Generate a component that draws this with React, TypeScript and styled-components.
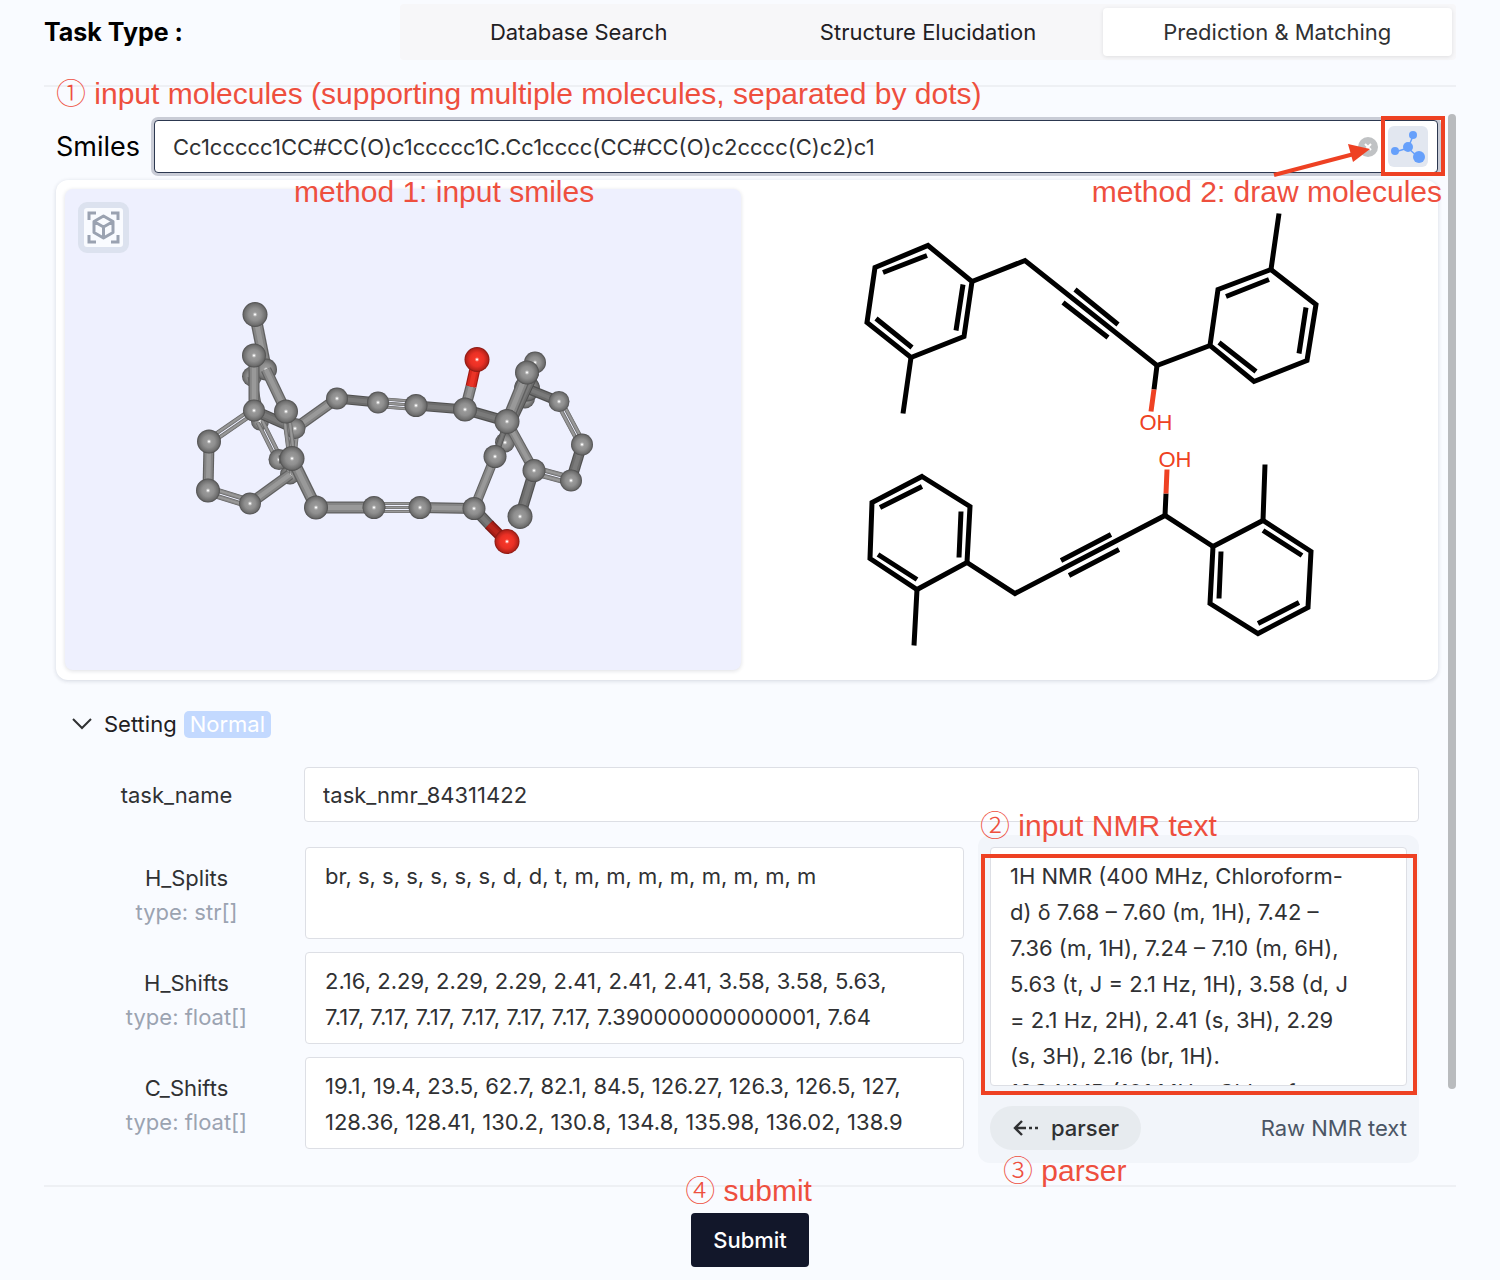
import React from "react";
import styled, { createGlobalStyle, css } from "styled-components";

const RED = "#ee4123";
const LABEL_RED = "#ee4f3e";

const GlobalStyle = createGlobalStyle`
  *, *::before, *::after { box-sizing: border-box; }
  body {
    margin: 0;
    background: #f9fbff;
    color: #303133;
    font-family: Inter, "Liberation Sans", sans-serif;
    font-size: 22px;
    line-height: 36px;
  }
  button, input, textarea { font: inherit; color: inherit; }
`;

const Page = styled.main`
  padding: 4px 44px 12px;
`;

const Header = styled.header`
  display: grid;
  grid-template-columns: 356fr 1056fr;
  align-items: center;
  height: 56px;
  margin-bottom: 25px;
`;

const Title = styled.h1`
  margin: 0;
  font-size: 25px;
  font-weight: 700;
  color: #000;
`;

const Tabs = styled.div`
  display: grid;
  grid-template-columns: repeat(3, 1fr);
  height: 56px;
  padding: 4px;
  border-radius: 4px;
  background: #f7f7f9;
`;

const Tab = styled.button<{ $active?: boolean }>`
  border: 0;
  border-radius: 4px;
  padding: 0;
  background: transparent;
  color: #1f2023;
  ${(p) =>
    p.$active &&
    css`
      background: #fff;
      color: #303133;
      box-shadow: 0 1px 4px rgba(0, 0, 0, 0.1);
    `}
`;

const Divider = styled.hr`
  height: 2px;
  margin: 0;
  border: 0;
  background: #eef0f4;
`;

const Scroller = styled.section`
  display: grid;
  grid-template-columns: 1fr 8px;
  column-gap: 10px;
  align-items: start;
  margin-top: 27px;
`;

const ScrollThumb = styled.div`
  height: 975px;
  border-radius: 4px;
  background: #b9bbbe;
`;

const Content = styled.div`
  padding: 6px 0 22px 12px;
`;

const Callout = styled.span<{ $left?: number; $right?: number; $top: number }>`
  position: absolute;
  top: ${(p) => p.$top}px;
  ${(p) => (p.$right === undefined ? `left: ${p.$left}px;` : `right: ${p.$right}px;`)}
  z-index: 3;
  color: ${LABEL_RED};
  font-family: "Liberation Sans", "Noto Sans CJK SC", sans-serif;
  font-size: 30px;
  line-height: 36px;
  white-space: nowrap;
  pointer-events: none;
`;

const Circled = styled.span`
  font-family: "Noto Sans CJK SC", sans-serif;
  font-weight: 300;
  line-height: 30px;
`;

const Highlight = styled.span<{ $inset: string; $width?: number }>`
  position: absolute;
  inset: ${(p) => p.$inset};
  ${(p) => p.$width && `width: ${p.$width}px;`}
  z-index: 2;
  border: 4px solid ${RED};
  pointer-events: none;
`;

const SmilesRow = styled.div`
  position: relative;
  display: flex;
  align-items: center;
  gap: 12px;
`;

const SmilesLabel = styled.label`
  width: 86px;
  font-size: 27px;
  color: #000;
`;

const SmilesBox = styled.div`
  position: relative;
  display: flex;
  align-items: center;
  flex: 1;
  height: 53px;
  padding-right: 9px;
  border: 1px solid #2c3850;
  border-radius: 4px;
  background: #fff;
  box-shadow: 0 0 0 3px #c9ccd6;
`;

const SmilesInput = styled.input`
  flex: 1;
  min-width: 0;
  padding: 0 18px;
  border: 0;
  outline: 0;
  background: transparent;
`;

const ClearButton = styled.button`
  display: grid;
  place-items: center;
  width: 20px;
  height: 20px;
  margin-right: 10px;
  padding: 0;
  border: 0;
  border-radius: 50%;
  background: #c0c2c4;
`;

const DrawButton = styled.button`
  display: grid;
  place-items: center;
  width: 40px;
  height: 41px;
  padding: 0;
  border: 0;
  border-radius: 6px;
  background: #e2e7f0;
`;

const Arrow = styled.svg`
  position: absolute;
  right: 65px;
  top: 21px;
  z-index: 3;
  pointer-events: none;
`;

const Viewer = styled.div`
  position: relative;
  display: grid;
  grid-template-columns: 676fr 689fr;
  height: 500px;
  margin-top: 7px;
  padding: 9px 8px 10px 9px;
  border-radius: 12px;
  background: #fff;
  box-shadow: 0 1px 4px rgba(20, 30, 60, 0.16);
`;

const Stage = styled.div`
  position: relative;
  border-radius: 8px;
  background: #eef0fe;
  box-shadow: 0 1px 4px rgba(20, 30, 60, 0.14);
`;

const Drawing = styled.svg`
  display: block;
  width: 100%;
  height: 100%;
  min-height: 0;
`;

const ViewButton = styled.button`
  position: absolute;
  left: 13px;
  top: 13px;
  display: grid;
  place-items: center;
  width: 51px;
  height: 51px;
  padding: 0;
  border: 6px solid #dce2ef;
  border-radius: 9px;
  background: #f9fbff;
`;

const SettingToggle = styled.button`
  display: flex;
  align-items: center;
  margin: 26px 0 0 16px;
  padding: 0;
  border: 0;
  background: transparent;
  color: #1f2023;
`;

const SettingName = styled.span`
  margin: 0 7px 0 12px;
`;

const Tag = styled.span`
  padding: 0 6px;
  border-radius: 5px;
  background: #c3d9ff;
  color: #fff;
  line-height: 27px;
`;

const Form = styled.form`
  display: grid;
  grid-template-columns: 248px 1fr;
  margin: 25px 19px 0 0;
`;

const NameLabel = styled.label`
  align-self: center;
  padding-right: 7px;
  text-align: center;
`;

const control = css`
  border: 1px solid #dddfe5;
  border-radius: 4px;
  outline: 0;
  background: #fff;
`;

const NameInput = styled.input`
  ${control}
  width: 100%;
  height: 55px;
  padding: 0 18px;
`;

const Fields = styled.div`
  grid-column: 1 / -1;
  display: grid;
  grid-template-columns: 908fr 441fr;
  column-gap: 14px;
  margin-top: 13px;
`;

const Peaks = styled.div`
  display: grid;
  align-content: start;
  row-gap: 13px;
  padding-top: 12px;
`;

const PeakRow = styled.div`
  display: grid;
  grid-template-columns: 249px 1fr;
  align-items: center;
`;

const PeakLabel = styled.label`
  padding: 3px 0 0 12px;
  text-align: center;
  line-height: 34px;
`;

const PeakType = styled.span`
  display: block;
  color: #9ba3b1;
`;

const PeakInput = styled.textarea`
  ${control}
  display: block;
  width: 100%;
  height: 92px;
  padding: 10px 48px 8px 19px;
  resize: none;
  overflow: hidden;
`;

const RawPanel = styled.div`
  position: relative;
  padding: 12px 12px 13px;
  border-radius: 12px;
  background: #f2f5fa;
`;

const RawInput = styled.textarea`
  ${control}
  display: block;
  width: 100%;
  height: 239px;
  padding: 10px 48px 0 19px;
  resize: none;
  overflow: hidden;
`;

const RawFooter = styled.div`
  display: flex;
  align-items: center;
  justify-content: space-between;
  margin-top: 20px;
`;

const ParserButton = styled.button`
  display: flex;
  align-items: center;
  gap: 12px;
  height: 44px;
  padding: 0 22px;
  border: 0;
  border-radius: 22px;
  background: #e7ebef;
  font-weight: 500;
`;

const RawCaption = styled.label`
  color: #4b5565;
`;

const Footer = styled.footer`
  display: flex;
  justify-content: center;
  padding-top: 26px;
`;

const SubmitSlot = styled.div`
  position: relative;
`;

const SubmitButton = styled.button`
  display: block;
  height: 54px;
  padding: 0 22px;
  border: 0;
  border-radius: 4px;
  background: #12172a;
  color: #fff;
  font-weight: 500;
`;

type P = [number, number];

/* Ball-and-stick model, painted back to front. */
type Part =
  | { k: "atom"; at: P; r: number; red?: boolean }
  | { k: "bond"; a: P; b: P; w?: number; n?: number; red?: boolean; shade?: boolean };

const atom = (x: number, y: number, r = 11, red = false): Part => ({ k: "atom", at: [x, y], r, red });
const bond = (a: P, b: P, w = 11, n = 1, o: { red?: boolean; shade?: boolean } = {}): Part => ({ k: "bond", a, b, w, n, ...o });

const MODEL: Part[] = [
  atom(252, 376, 10),
  bond([252, 376], [260, 421], 9),
  atom(260, 421, 9),
  bond([260, 421], [279, 459], 4, 2),
  atom(290, 474, 10),
  bond([295, 428], [290, 474], 4, 2),
  bond([290, 474], [250, 503]),
  atom(279, 459, 10.5),
  bond([279, 459], [292, 458], 8, 1, { shade: true }),
  bond([254, 410], [295, 428], 11, 1, { shade: true }),
  bond([295, 428], [337, 398]),
  atom(295, 428, 10.5),
  bond([255, 314], [266, 369], 12),
  atom(266, 369, 11),
  bond([266, 369], [286, 411], 11),
  bond([254, 355], [254, 410], 11),
  atom(254, 355, 12),
  atom(255, 314, 12.5),
  bond([254, 410], [209, 441], 4, 2),
  atom(254, 410, 11),
  bond([286, 411], [292, 458], 4, 2),
  atom(286, 411, 12),
  bond([209, 441], [208, 490], 11),
  bond([208, 490], [250, 503], 5, 2),
  atom(209, 441, 12),
  atom(208, 490, 12),
  atom(250, 503, 11),
  bond([292, 458], [316, 507], 12),
  atom(292, 458, 12.5),
  bond([316, 507], [374, 507], 12),
  bond([374, 507], [420, 507], 3, 3),
  bond([420, 507], [474, 508], 11),
  atom(316, 507, 12),
  atom(374, 507, 11.5),
  atom(420, 507, 11.5),
  bond([337, 398], [378, 402], 10, 1, { shade: true }),
  bond([378, 402], [416, 405], 3, 3),
  bond([416, 405], [465, 409], 10, 1, { shade: true }),
  atom(337, 398, 11),
  atom(378, 402, 11),
  atom(416, 405, 11.5),
  bond([465, 409], [507, 421], 11, 1, { shade: true }),
  bond([465, 409], [471, 386], 11),
  bond([471, 386], [477, 359], 11, 1, { red: true }),
  atom(465, 409, 12),
  atom(477, 359, 12.5, true),
  atom(535, 362, 11),
  atom(525, 398, 10),
  atom(527, 388, 13),
  bond([527, 388], [559, 401], 10, 1, { shade: true }),
  bond([559, 401], [582, 444], 4, 2),
  bond([582, 444], [571, 480], 11, 1, { shade: true }),
  bond([534, 470], [571, 480], 5, 2),
  bond([535, 372], [512, 421], 9, 1, { shade: true }),
  atom(559, 401, 10.5),
  atom(582, 444, 11),
  atom(571, 480, 11),
  atom(505, 442, 10),
  bond([507, 421], [495, 456], 6, 1, { shade: true }),
  bond([512, 430], [534, 470], 10),
  bond([534, 470], [520, 516], 11, 1, { shade: true }),
  atom(534, 470, 11.5),
  atom(520, 516, 12.5),
  bond([527, 372], [507, 421], 12),
  atom(527, 372, 12),
  atom(507, 421, 12.5),
  bond([495, 456], [474, 508], 10),
  atom(495, 456, 11.5),
  bond([474, 508], [490, 525], 11, 1, { shade: true }),
  bond([489, 524], [506, 541], 11, 1, { red: true, shade: true }),
  atom(474, 508, 11.5),
  atom(507, 541, 12.5, true),
];

function Stick({ a, b, w, red, shade }: { a: P; b: P; w: number; red?: boolean; shade?: boolean }) {
  const tones = red
    ? shade ? ["#7c1510", "#a81e17", "#b9261c"] : ["#a11a13", "#d9281d", "#ea3427"]
    : shade ? ["#505050", "#6c6c6c", "#7a7a7a"] : ["#606060", "#858585", "#999999"];
  const line = { x1: a[0], y1: a[1], x2: b[0], y2: b[1] };
  return (
    <>
      <line {...line} stroke={tones[0]} strokeWidth={w} />
      <line {...line} stroke={tones[1]} strokeWidth={w * 0.78} />
      <line {...line} stroke={tones[2]} strokeWidth={w * 0.4} />
    </>
  );
}

function Bond({ a, b, w = 11, n = 1, red, shade }: { a: P; b: P; w?: number; n?: number; red?: boolean; shade?: boolean }) {
  const len = Math.hypot(b[0] - a[0], b[1] - a[1]);
  const nx = -(b[1] - a[1]) / len;
  const ny = (b[0] - a[0]) / len;
  const step = n === 3 ? 4 : w + 1;
  return (
    <>
      {Array.from({ length: n }, (_, i) => {
        const d = (i - (n - 1) / 2) * step;
        return (
          <Stick
            key={i}
            a={[a[0] + nx * d, a[1] + ny * d]}
            b={[b[0] + nx * d, b[1] + ny * d]}
            w={w}
            red={red}
            shade={shade}
          />
        );
      })}
    </>
  );
}

function Model3D() {
  return (
    <Drawing viewBox="65 189 676 480" role="img" aria-label="3D molecule model">
      <defs>
        <radialGradient id="carbon">
          <stop offset="0" stopColor="#a0a0a0" />
          <stop offset="0.5" stopColor="#8f8f8f" />
          <stop offset="0.85" stopColor="#6e6e6e" />
          <stop offset="1" stopColor="#4c4c4c" />
        </radialGradient>
        <radialGradient id="oxygen">
          <stop offset="0" stopColor="#fb3a2b" />
          <stop offset="0.55" stopColor="#ea3025" />
          <stop offset="0.85" stopColor="#bb241b" />
          <stop offset="1" stopColor="#841711" />
        </radialGradient>
      </defs>
      {MODEL.map((p, i) =>
        p.k === "atom" ? (
          <g key={i}>
            <circle cx={p.at[0]} cy={p.at[1]} r={p.r} fill={p.red ? "url(#oxygen)" : "url(#carbon)"} />
            <circle cx={p.at[0]} cy={p.at[1]} r="2" fill="#fff" opacity="0.35" />
            <circle cx={p.at[0]} cy={p.at[1]} r="1" fill="#fff" />
          </g>
        ) : (
          <Bond key={i} {...p} />
        )
      )}
    </Drawing>
  );
}

function Structures2D() {
  return (
    <Drawing viewBox="741 189 689 480" role="img" aria-label="Structural formulas">
      <g fill="none" stroke="#000" strokeWidth="5" strokeLinejoin="miter">
        <path d="M928 245L972 281L964 336L911 357L867 322L875 267Z" />
        <path d="M911 357L903 413M883 272L927 255M963 284L956 330M912 347L876 318" />
        <path d="M972 281L1025 260L1157 365L1210 345" />
        <path d="M1075 289L1118 324M1063 302L1108 337M1157 365L1154 389" />
        <path d="M1210 345L1218 289L1271 269L1316 304L1307 360L1254 381Z" />
        <path d="M1226 296L1269 279M1306 307L1299 353M1219 342L1256 371M1271 269L1279 213" />
        <path d="M922 476L970 506L967 562L917 589L870 558L872 502Z" />
        <path d="M917 589L914 645M880 507L922 486M961 511L959 557M878 554L917 579" />
        <path d="M967 562L1015 593L1165 515L1213 546" />
        <path d="M1061 560L1111 534M1069 575L1119 549M1165 515L1166 493" />
        <path d="M1213 546L1263 520L1311 551L1308 607L1258 633L1210 603Z" />
        <path d="M1263 530L1302 555M1299 602L1258 623M1221 551L1219 598M1263 520L1265 464" />
        <path d="M1154 389L1151 411M1166 493L1167 469" stroke={RED} />
      </g>
      <g fill={RED} fontFamily="Liberation Sans, sans-serif" fontSize="22" textAnchor="middle">
        <text x="1156" y="429">OH</text>
        <text x="1175" y="466">OH</text>
      </g>
    </Drawing>
  );
}

const ScanCubeIcon = () => (
  <svg width="33" height="33" viewBox="0 0 33 33" fill="none" stroke="#9aa2b1" strokeWidth="3" strokeLinejoin="round">
    <path d="M2 9V2H9M24 2H31V9M31 24V31H24M9 31H2V24" strokeLinejoin="miter" />
    <path d="M16.500 5L26 10.500V21.500L16.500 27L7 21.500V10.500ZM7 10.500L16.500 16L26 10.500M16.500 16V27" />
  </svg>
);

const MoleculeIcon = () => (
  <svg width="36" height="36" viewBox="0 0 36 36" fill="#66a0fb" stroke="#66a0fb">
    <path d="M18 19L23 7M18 19L5 23M18 19L29 29" strokeWidth="1.5" />
    <g stroke="none">
      <circle cx="23" cy="6" r="4" />
      <circle cx="18" cy="18" r="5" />
      <circle cx="5" cy="22" r="4" />
      <circle cx="29" cy="28" r="6" />
    </g>
  </svg>
);

const peaks = [
  { id: "H_Splits", type: "str[]", value: "br, s, s, s, s, s, s, d, d, t, m, m, m, m, m, m, m, m" },
  {
    id: "H_Shifts",
    type: "float[]",
    value: "2.16, 2.29, 2.29, 2.29, 2.41, 2.41, 2.41, 3.58, 3.58, 5.63, 7.17, 7.17, 7.17, 7.17, 7.17, 7.17, 7.390000000000001, 7.64",
  },
  {
    id: "C_Shifts",
    type: "float[]",
    value: "19.1, 19.4, 23.5, 62.7, 82.1, 84.5, 126.27, 126.3, 126.5, 127, 128.36, 128.41, 130.2, 130.8, 134.8, 135.98, 136.02, 138.9",
  },
];

const rawText =
  "1H NMR (400 MHz, Chloroform-d) δ 7.68 – 7.60 (m, 1H), 7.42 – 7.36 (m, 1H), 7.24 – 7.10 (m, 6H), 5.63 (t, J = 2.1 Hz, 1H), 3.58 (d, J = 2.1 Hz, 2H), 2.41 (s, 3H), 2.29 (s, 3H), 2.16 (br, 1H).\n13C NMR (101 MHz, Chloroform-d)";

export default function App() {
  return (
    <>
      <GlobalStyle />
      <Page>
        <Header>
          <Title>Task Type :</Title>
          <Tabs role="tablist">
            <Tab role="tab" aria-selected={false}>Database Search</Tab>
            <Tab role="tab" aria-selected={false}>Structure Elucidation</Tab>
            <Tab role="tab" aria-selected $active>Prediction &amp; Matching</Tab>
          </Tabs>
        </Header>
        <Divider />
        <Scroller>
          <Content>
            <SmilesRow>
              <Callout $left={0} $top={-44}>
                <Circled>①</Circled> input molecules (supporting multiple molecules, separated by dots)
              </Callout>
              <SmilesLabel htmlFor="smiles">Smiles</SmilesLabel>
              <SmilesBox>
                <SmilesInput id="smiles" defaultValue="Cc1ccccc1CC#CC(O)c1ccccc1C.Cc1cccc(CC#CC(O)c2cccc(C)c2)c1" />
                <ClearButton type="button" aria-label="Clear">
                  <svg width="8" height="8" viewBox="0 0 8 8" stroke="#fff" strokeWidth="2">
                    <path d="M1 1L7 7M7 1L1 7" />
                  </svg>
                </ClearButton>
                <DrawButton type="button" aria-label="Draw molecules">
                  <MoleculeIcon />
                </DrawButton>
                <Highlight $inset="-5px -8px -4px auto" $width={64} />
                <Arrow width="100" height="36" viewBox="0 0 100 36" fill={RED} stroke={RED}>
                  <path d="M2 33L82 12" strokeWidth="4" />
                  <path d="M98 7L76 2L81 20Z" stroke="none" />
                </Arrow>
              </SmilesBox>
            </SmilesRow>
            <Viewer>
              <Callout $left={238} $top={-6}>method 1: input smiles</Callout>
              <Callout $right={-4} $top={-6}>method 2: draw molecules</Callout>
              <Stage>
                <Model3D />
                <ViewButton type="button" aria-label="Toggle 3D view">
                  <ScanCubeIcon />
                </ViewButton>
              </Stage>
              <Structures2D />
            </Viewer>
            <SettingToggle type="button" aria-expanded>
              <svg width="20" height="12" viewBox="0 0 20 12" fill="none" stroke="#303133" strokeWidth="2">
                <path d="M1 1L10 10L19 1" />
              </svg>
              <SettingName>Setting</SettingName>
              <Tag>Normal</Tag>
            </SettingToggle>
            <Form id="task">
              <NameLabel htmlFor="task_name">task_name</NameLabel>
              <NameInput id="task_name" defaultValue="task_nmr_84311422" />
              <Fields>
                <Peaks>
                  {peaks.map((p) => (
                    <PeakRow key={p.id}>
                      <PeakLabel htmlFor={p.id}>
                        {p.id}
                        <PeakType>type: {p.type}</PeakType>
                      </PeakLabel>
                      <PeakInput id={p.id} defaultValue={p.value} />
                    </PeakRow>
                  ))}
                </Peaks>
                <RawPanel>
                  <Callout $left={2} $top={-27}>
                    <Circled>②</Circled> input NMR text
                  </Callout>
                  <Highlight $inset="19px 2px 68px 3px" />
                  <RawInput id="raw" defaultValue={rawText} />
                  <RawFooter>
                    <ParserButton type="button">
                      <svg width="27" height="18" viewBox="0 0 27 18" fill="none" stroke="#303133" strokeWidth="2">
                        <path d="M10 2L3 9L10 16M3 9H14M17 9H20M23 9H26" strokeWidth="2.4" />
                      </svg>
                      parser
                    </ParserButton>
                    <RawCaption htmlFor="raw">Raw NMR text</RawCaption>
                  </RawFooter>
                  <Callout $left={25} $top={318}>
                    <Circled>③</Circled> parser
                  </Callout>
                </RawPanel>
              </Fields>
            </Form>
          </Content>
          <ScrollThumb />
        </Scroller>
        <Divider />
        <Footer>
          <SubmitSlot>
            <Callout $left={-6} $top={-40}>
              <Circled>④</Circled> submit
            </Callout>
            <SubmitButton type="submit" form="task">Submit</SubmitButton>
          </SubmitSlot>
        </Footer>
      </Page>
    </>
  );
}
